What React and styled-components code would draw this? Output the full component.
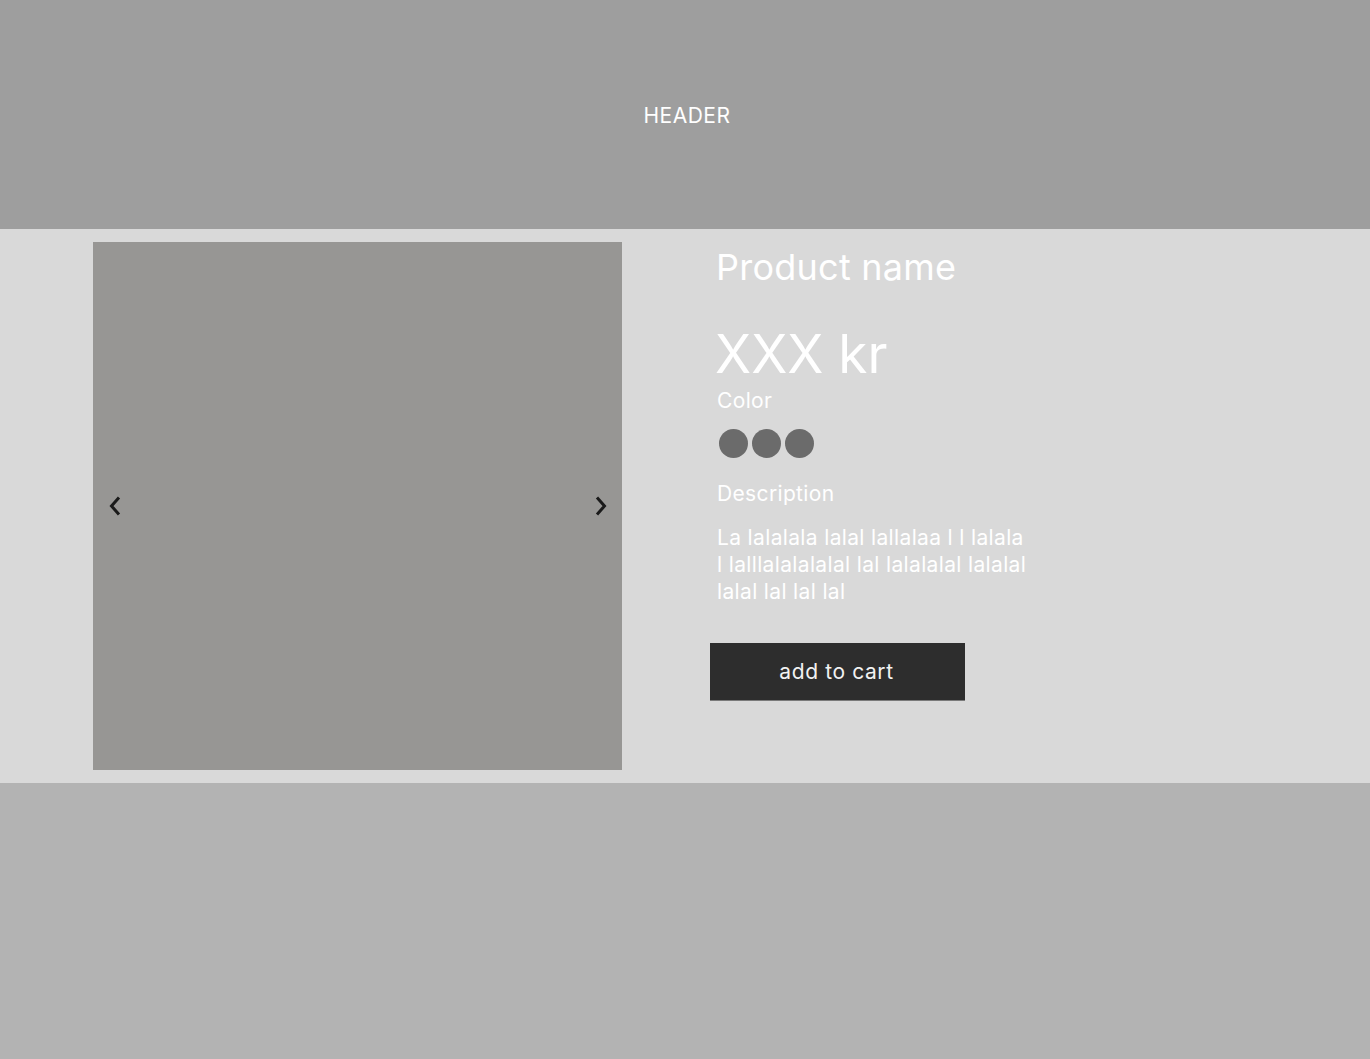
import React from "react";
import styled, { createGlobalStyle } from "styled-components";

const Global = createGlobalStyle`
  html, body { margin: 0; padding: 0; }
  body { font-family: Inter, "Noto Sans", sans-serif; }
  * { box-sizing: border-box; }
`;

const Page = styled.div`
  display: flex;
  flex-direction: column;
  width: 1370px;
  height: 1059px;
`;

const Header = styled.header`
  height: 229px;
  background: #9e9e9e;
  display: flex;
  align-items: center;
  justify-content: center;
  color: #ffffff;
  font-size: 21px;
  letter-spacing: 0.5px;
  padding-top: 2px;
  padding-left: 4px;
`;

const Main = styled.main`
  height: 554px;
  background: #d9d9d9;
  display: flex;
  padding: 13px 0 13px 93px;
  gap: 88px;
`;

const Gallery = styled.div`
  width: 529px;
  height: 528px;
  background: #979694;
  display: flex;
  align-items: center;
  justify-content: space-between;
  padding: 0 12px 0 13px;
`;

const Arrow = styled.button`
  background: none;
  border: 0;
  padding: 0;
  width: 18px;
  height: 28px;
  display: flex;
  align-items: center;
  justify-content: center;
  cursor: pointer;
`;

const Info = styled.section`
  display: flex;
  flex-direction: column;
  align-items: flex-start;
  padding-top: 4px;
`;

const Text = styled.div`
  color: #ffffff;
  padding-left: ${(p) => p.$inset ?? 7}px;
  font-size: ${(p) => p.$size}px;
  line-height: ${(p) => p.$lh}px;
  letter-spacing: ${(p) => p.$ls ?? 0.35}px;
  margin-top: ${(p) => p.$mt ?? 0}px;
  max-width: ${(p) => p.$max ?? 600}px;
`;

const Swatches = styled.div`
  display: flex;
  gap: 4px;
  padding-left: 9px;
  margin-top: 14px;
`;

const Swatch = styled.span`
  width: 29px;
  height: 29px;
  border-radius: 50%;
  background: ${(p) => p.$color};
`;

const CartButton = styled.button`
  margin-top: 38px;
  width: 255px;
  height: 58px;
  background: #2d2d2d;
  color: #f2f2f2;
  border: 0;
  border-bottom: 1px solid #7a7a7a;
  font-family: Inter, "Noto Sans", sans-serif;
  font-size: 21px;
  letter-spacing: 0.6px;
  padding: 0 2px 0 0;
  cursor: pointer;
`;

const Footer = styled.footer`
  flex: 1;
  background: #b3b3b3;
`;

const Chevron = ({ dir }) => (
  <svg width="16" height="24" viewBox="0 0 16 24" fill="none">
    <path
      d={dir === "left" ? "M12 3.5 L4.5 12 L12 20.5" : "M4 3.5 L11.5 12 L4 20.5"}
      stroke="#1a1a1a"
      strokeWidth="3"
    />
  </svg>
);

export default function App() {
  return (
    <>
      <Global />
      <Page>
        <Header>HEADER</Header>
        <Main>
          <Gallery>
            <Arrow aria-label="previous">
              <Chevron dir="left" />
            </Arrow>
            <Arrow aria-label="next">
              <Chevron dir="right" />
            </Arrow>
          </Gallery>
          <Info>
            <Text $size={36} $lh={42} $inset={6} $ls={0.25}>Product name</Text>
            <Text $size={53} $lh={64} $mt={34} $inset={5} $ls={0}>XXX kr</Text>
            <Text $size={21} $lh={28} $mt={1}>Color</Text>
            <Swatches>
              <Swatch $color="#6b6b6b" />
              <Swatch $color="#6b6b6b" />
              <Swatch $color="#6b6b6b" />
            </Swatches>
            <Text $size={21} $lh={28} $mt={22}>Description</Text>
            <Text $size={21} $lh={27} $mt={16} $max={323}>
              La lalalala lalal lallalaa l l lalala l lalllalalalalal lal lalalalal lalalal lalal lal lal lal
            </Text>
            <CartButton>add to cart</CartButton>
          </Info>
        </Main>
        <Footer />
      </Page>
    </>
  );
}
